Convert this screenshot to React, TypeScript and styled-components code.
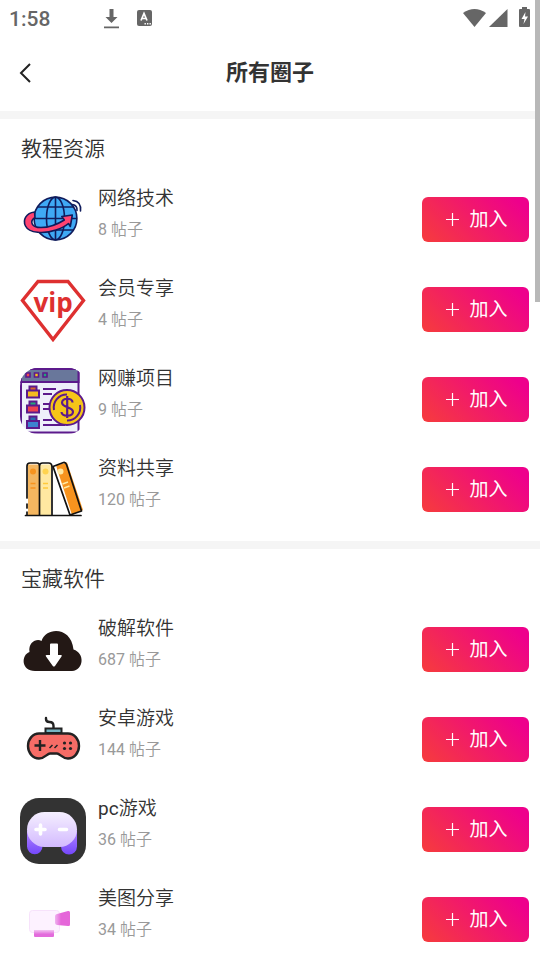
import React from "react";
import styled, { createGlobalStyle } from "styled-components";

const GlobalStyle = createGlobalStyle`
  * { box-sizing: border-box; }
  body {
    margin: 0;
    background: #fff;
    color: #333;
    font-family: Roboto, "Noto Sans CJK SC", sans-serif;
  }
`;

const Page = styled.div`
  height: 100vh;
  overflow-y: auto;
  scrollbar-width: none;
  background: #fff;
`;

const ScrollThumb = styled.div`
  position: fixed;
  top: 0;
  right: 0;
  width: 5px;
  height: 302px;
  background: #b8b8b8;
`;

const StatusBar = styled.div`
  display: flex;
  align-items: flex-start;
  justify-content: space-between;
  height: 37px;
  padding: 0 9px;
  color: #666;
`;

const StatusGroup = styled.div`
  display: flex;
  align-items: center;
  height: 36px;
`;

const Clock = styled.time`
  width: 94px;
  font-size: 21px;
  font-weight: 500;
  line-height: 24px;
  padding-top: 2px;
`;

const StatusIcon = styled.svg<{ $gap?: number }>`
  display: block;
  margin-left: ${(p) => p.$gap ?? 0}px;
`;

const Header = styled.header`
  display: grid;
  grid-template-columns: 52px 1fr 52px;
  align-items: center;
  height: 74px;
  padding-bottom: 2px;
`;

const BackButton = styled.button`
  display: flex;
  align-items: center;
  justify-content: flex-start;
  height: 48px;
  padding: 0 0 0 19px;
  border: 0;
  background: none;
  color: #222;
  cursor: pointer;
`;

const Title = styled.h1`
  margin: 0;
  font-size: 22px;
  font-weight: 700;
  line-height: 32px;
  text-align: center;
`;

const Section = styled.section`
  padding-bottom: 5px;
  border-top: 8px solid #f5f5f5;
`;

const SectionTitle = styled.h2`
  margin: 0;
  padding: 15px 21px 12px;
  font-size: 21px;
  font-weight: 350;
  line-height: 30px;
`;

const List = styled.ul`
  margin: 0;
  padding: 0;
  list-style: none;
`;

const Row = styled.li`
  display: flex;
  align-items: center;
  height: 90px;
  padding: 0 11px 0 20px;
`;

const Avatar = styled.svg`
  display: block;
  flex: none;
  width: 66px;
  height: 66px;
`;

const Info = styled.div`
  flex: 1;
  align-self: flex-start;
  padding: 7px 12px 0 12px;
`;

const Name = styled.h3`
  margin: 0;
  font-size: 19px;
  font-weight: 350;
  line-height: 32px;
`;

const Count = styled.p`
  margin: 0;
  font-size: 16px;
  font-weight: 350;
  line-height: 30px;
  color: #999;
`;

const Latin = styled.span`
  font-weight: 400;
`;

const JoinButton = styled.button`
  display: flex;
  align-items: center;
  justify-content: center;
  gap: 10px;
  width: 107px;
  height: 45px;
  margin-bottom: 3px;
  padding: 0 0 0 3px;
  border: 0;
  border-radius: 6px;
  background: linear-gradient(45deg, #f63c3c, #ee008c 90%);
  color: #fff;
  font-family: inherit;
  font-size: 19px;
  line-height: 28px;
  cursor: pointer;
`;

const Globe = () => (
  <Avatar viewBox="0 0 66 66" fill="none" stroke="#101c5c" strokeWidth="1.6" aria-hidden>
    <circle cx="35.5" cy="30.5" r="21.4" fill="#3fa9f5" />
    <ellipse cx="35.5" cy="30.5" rx="9" ry="21.4" />
    <path d="M35.5 9v43M18 19h35M14 30.500h43M18 42h35" />
    <path d="M53 12.500q8.500 1 7.500 10.500M52.500 16.500q5 1 4.500 6" strokeLinecap="round" />
    <path
      d="M14.500 24C6 25 2.500 32 5.500 38c3.500 7.500 19 8 30.500 4 6-2 9.500-4 12.500-6.500l1.800 3 2-11.500-10.500 1.500 2.500 3.500C38 36 29 39.500 21 39.500 11 39.500 9.500 33 15 29.500z"
      fill="#ff4371"
      strokeLinejoin="round"
    />
  </Avatar>
);

const Vip = () => (
  <Avatar viewBox="0 0 66 66" aria-hidden>
    <path d="M18 3.500H48L63.500 22.500 33 61.500 2.500 22.500Z" fill="none" stroke="#de3030" strokeWidth="3.4" />
    <text x="33" y="34" textAnchor="middle" fill="#de3030" fontFamily="Open Sans, sans-serif" fontSize="26" fontWeight="700">
      vip
    </text>
  </Avatar>
);

const Earnings = () => (
  <Avatar viewBox="0 0 66 66" fill="none" stroke="#5c1a8c" strokeWidth="2" aria-hidden>
    <clipPath id="earnings-shape">
      <rect width="66" height="66" rx="18" />
    </clipPath>
    <g clipPath="url(#earnings-shape)">
      <path d="M1 1h57.500v63.500H1z" fill="#eef0fa" />
      <path d="M1 1h57.500v13H1z" fill="#69779b" />
      <path d="M6 5h4v4H6z" fill="#f04a50" strokeWidth="1.600" />
      <path d="M14.500 5h4v4h-4z" fill="#f5c518" strokeWidth="1.600" />
      <path d="M23 5h4v4h-4z" fill="#20a877" strokeWidth="1.600" />
      <path d="M9.500 18.500h7v6h-7z" fill="#d8672d" />
      <path d="M7 22.500h12v7H7z" fill="#f5bd1f" />
      <path d="M9.500 33.500h7v6h-7z" fill="#22a77b" />
      <path d="M7 37.500h12v7H7z" fill="#ee4151" />
      <path d="M9.500 48.500h7v6h-7z" fill="#286baf" />
      <path d="M7 53h12v7H7z" fill="#3d82cf" />
      <path d="M23 21h13M23 26h9M23 36h7M23 41h8M23 52h9M23 57h22" />
      <circle cx="47" cy="39.500" r="17.500" fill="#f5c518" />
      <path d="M34 42a13 13 0 0 1 13-15.500M60 37a13 13 0 0 1-13 15.500" />
      <path d="M52.500 34.500c0-5-10-5-10.500 0 0 5.500 11 4 11 9.500-.5 5-11 5-11.500 0M47.200 28v22" strokeWidth="2.200" />
    </g>
  </Avatar>
);

const Books = () => (
  <Avatar viewBox="0 0 66 66" fill="none" aria-hidden>
    <path d="M8 6.500h11v51H8z" fill="#f4b660" />
    <path d="M20 6.500h11v51H20z" fill="#ffe8a1" />
    <path d="M36 7.500 47 4.500 63 52 52 57z" fill="#f7931e" />
    <circle cx="13" cy="13.500" r="3" fill="#f7931e" />
    <circle cx="25.500" cy="13.500" r="3" fill="#ffd34f" />
    <circle cx="40.500" cy="13.500" r="3" fill="#ffe8a1" />
    <path d="M10.500 25.500h5M10.500 30h5" stroke="#f7931e" strokeWidth="1.400" />
    <path d="M23 25.500h5M23 30h5" stroke="#ffc93c" strokeWidth="1.400" />
    <path d="m42.500 26 5.500-2M44 30l5.500-2" stroke="#ffe8a1" strokeWidth="1.400" />
    <g stroke="#111" strokeWidth="1.700" strokeLinecap="round" strokeLinejoin="round">
      <path d="M7 40V8q0-3 3-3h7q2.500 0 2.500 3v49M19.500 8q0-3 3-3h6q3.500 0 3.500 4v48M7 46v4M7 54v3M5.500 57.500H61" />
      <path d="M33 8.500 43.500 4.500q2-.5 3 2L61.500 53 50 57z" />
    </g>
  </Avatar>
);

const CloudDownload = () => (
  <Avatar viewBox="0 0 66 66" aria-hidden>
    <path
      d="M15 53C1 53 1 37 9.500 34 8 24 17 20 21.500 23 26 9 51 8 53.500 31.500 65 35 64 52 52 53z"
      fill="#231815"
    />
    <path d="M30 26.500q0-1 1-1h6q1 0 1 1V37h3q1.500 0 .5 1.500L35 48q-1.200 1-2.200 0L26 38.500q-1-1.500.5-1.500H30z" fill="#fff" />
  </Avatar>
);

const Gamepad = () => (
  <Avatar viewBox="0 0 66 66" fill="none" stroke="#222" strokeWidth="2.400" aria-hidden>
    <path d="M26 10v1q0 3 3.500 3 4 0 4 4v3" strokeLinecap="round" />
    <path d="M25.500 20.500h16v4.500h-16z" fill="#76b6c4" strokeWidth="2" />
    <path
      d="M19 25.500H48A11 12.500 0 0 1 48 50.500C42 50.500 40 45.500 37 45.500H30C27 45.500 25 50.500 19 50.500A11 12.500 0 0 1 19 25.500Z"
      fill="#f66c66"
    />
    <path d="M14.500 37.500h11M20 32v11" />
    <path d="m29.500 40 3-3M34.500 40l3-3" strokeWidth="1.500" />
    <g fill="#222" stroke="none">
      <circle cx="44.500" cy="35" r="1.600" />
      <circle cx="50.500" cy="35" r="1.600" />
      <circle cx="44.500" cy="40.500" r="1.600" />
      <circle cx="50.500" cy="40.500" r="1.600" />
    </g>
  </Avatar>
);

const PcPad = () => (
  <Avatar viewBox="0 0 66 66" aria-hidden>
    <defs>
      <linearGradient id="pad-body" x2="0" y2="1">
        <stop stopColor="#f5efff" />
        <stop offset="1" stopColor="#d3baff" />
      </linearGradient>
      <linearGradient id="pad-grip" x2="0" y2="1">
        <stop stopColor="#b184ff" />
        <stop offset="1" stopColor="#7447fb" />
      </linearGradient>
    </defs>
    <rect width="66" height="66" rx="19" fill="#333" />
    <path d="M7 33h15.500v15.500a7.700 7.700 0 0 1-15.500 0zM41 33h16v15.500a8 8 0 0 1-16 0z" fill="url(#pad-grip)" />
    <rect x="7" y="14" width="50" height="35" rx="17.500" fill="url(#pad-body)" />
    <path d="M16 31.500h9M20.500 27v9M39.500 31.500h7" stroke="#fff" strokeWidth="3.600" strokeLinecap="round" />
  </Avatar>
);

const Camera = () => (
  <Avatar viewBox="0 0 66 66" aria-hidden>
    <defs>
      <linearGradient id="camera-lens">
        <stop stopColor="#efb2ef" />
        <stop offset=".4" stopColor="#e567d9" />
      </linearGradient>
      <linearGradient id="camera-base" x2="0" y2="1">
        <stop stopColor="#f2c3f2" />
        <stop offset=".6" stopColor="#e36bdc" />
      </linearGradient>
    </defs>
    <rect x="9.500" y="22.500" width="30" height="22" rx="3" fill="#fdf2ff" stroke="#f7e2fb" />
    <path d="M35 28q0-1.500 2-2l11-3q2-.5 2 1.500v12q0 2-2 1.500l-11-1q-2-.5-2-2z" fill="url(#camera-lens)" />
    <path d="M14 42h20v6q0 1-1 1H15q-1 0-1-1z" fill="url(#camera-base)" />
  </Avatar>
);

type Circle = { prefix?: string; name: string; posts: number; Icon: () => React.ReactElement };

const sections: { title: string; circles: Circle[] }[] = [
  {
    title: "教程资源",
    circles: [
      { name: "网络技术", posts: 8, Icon: Globe },
      { name: "会员专享", posts: 4, Icon: Vip },
      { name: "网赚项目", posts: 9, Icon: Earnings },
      { name: "资料共享", posts: 120, Icon: Books },
    ],
  },
  {
    title: "宝藏软件",
    circles: [
      { name: "破解软件", posts: 687, Icon: CloudDownload },
      { name: "安卓游戏", posts: 144, Icon: Gamepad },
      { prefix: "pc", name: "游戏", posts: 36, Icon: PcPad },
      { name: "美图分享", posts: 34, Icon: Camera },
    ],
  },
];

export default function App() {
  return (
    <Page lang="zh-CN">
      <GlobalStyle />
      <StatusBar>
        <StatusGroup>
          <Clock>1:58</Clock>
          <StatusIcon width="17" height="21" viewBox="0 0 17 21" fill="currentColor" aria-hidden>
            <path d="M6.500 1h4v8h4l-6 6-6-6h4zM1 18.500h15v1.800H1z" />
          </StatusIcon>
          <StatusIcon $gap={17} width="15" height="17" viewBox="0 0 15 17" aria-hidden>
            <rect width="15" height="16" rx="2" fill="currentColor" />
            <path d="m4 10.500 3-7 3 7M5 8.500h4" fill="none" stroke="#fff" strokeWidth="1.700" />
            <path d="M7.500 13h1.400v1.400H7.500zM10 13h1.400v1.400H10zM12.500 13h1.400v1.400h-1.400z" fill="#fff" />
          </StatusIcon>
        </StatusGroup>
        <StatusGroup>
          <StatusIcon width="23" height="18" viewBox="0 0 23 18" fill="currentColor" aria-hidden>
            <path d="M0 4Q11.500-4 23 4L11.500 18z" />
          </StatusIcon>
          <StatusIcon $gap={3} width="19" height="18" viewBox="0 0 19 18" fill="currentColor" aria-hidden>
            <path d="M0 18 18.500 0v18z" />
          </StatusIcon>
          <StatusIcon $gap={10} width="13" height="22" viewBox="0 0 13 22" aria-hidden>
            <path d="M4 0h5v2h2q1 0 1 1v16q0 1-1 1H2q-1 0-1-1V3q0-1 1-1h2z" fill="currentColor" />
            <path d="m7.500 5-4 7h3l-1 5 4.500-7.500H7z" fill="#fff" />
          </StatusIcon>
        </StatusGroup>
      </StatusBar>
      <Header>
        <BackButton type="button" aria-label="返回">
          <svg width="12" height="20" viewBox="0 0 12 20" fill="none" stroke="currentColor" strokeWidth="2" aria-hidden>
            <path d="m11 1-9 9 9 9" />
          </svg>
        </BackButton>
        <Title>所有圈子</Title>
      </Header>
      <main>
        {sections.map(({ title, circles }) => (
          <Section key={title}>
            <SectionTitle>{title}</SectionTitle>
            <List>
              {circles.map(({ prefix, name, posts, Icon }) => (
                <Row key={name}>
                  <Icon />
                  <Info>
                    <Name>
                      {prefix && <Latin>{prefix}</Latin>}
                      {name}
                    </Name>
                    <Count>
                      <Latin>{posts}</Latin> 帖子
                    </Count>
                  </Info>
                  <JoinButton type="button">
                    <svg width="13" height="13" viewBox="0 0 13 13" stroke="currentColor" strokeWidth="1.200" aria-hidden>
                      <path d="M0 6.500h13M6.500 0v13" />
                    </svg>
                    加入
                  </JoinButton>
                </Row>
              ))}
            </List>
          </Section>
        ))}
      </main>
      <ScrollThumb />
    </Page>
  );
}
